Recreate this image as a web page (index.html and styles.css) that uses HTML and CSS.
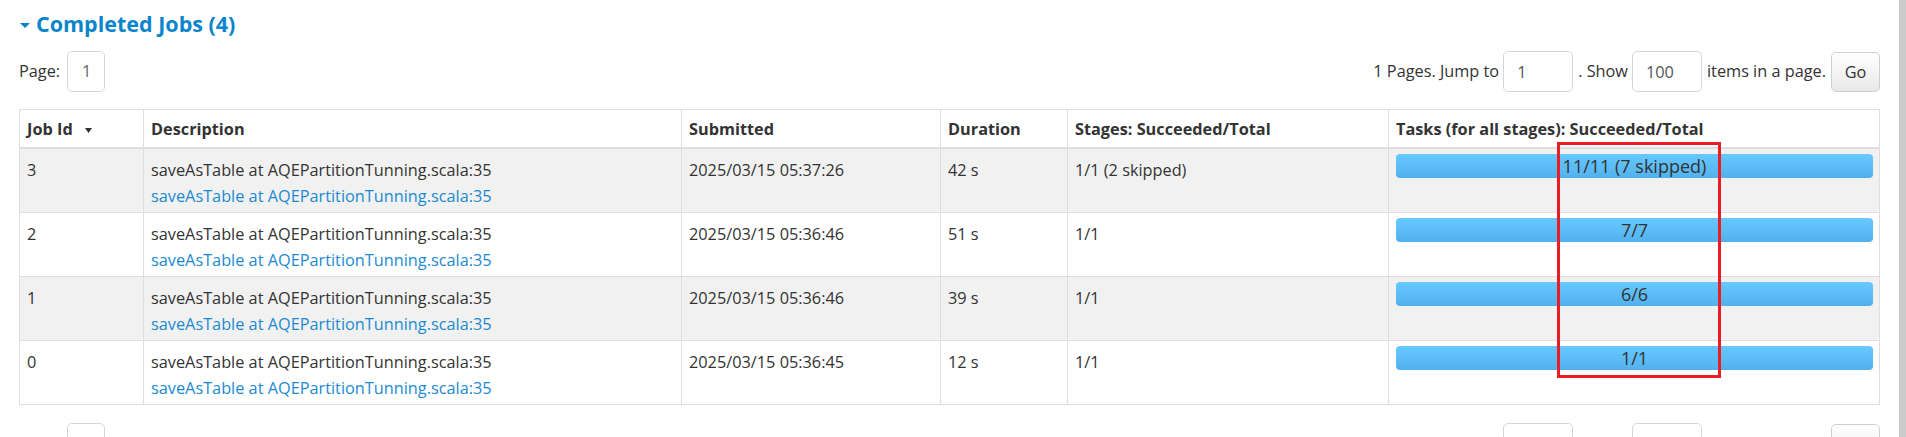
FILE: index.html
```html
<!DOCTYPE html>
<html lang="en">
<head>
  <meta charset="utf-8" />
  <title>Spark Jobs</title>
  <link rel="stylesheet" href="styles.css">
</head>
<body>
  <div class="page">
    <h4 class="section-title"><span class="arrow-open"></span>Completed Jobs (4)</h4>

    <div class="paged-nav">
      <div class="nav-left">
        <span>Page:</span>
        <span class="page-box">1</span>
      </div>
      <form class="nav-right">
        <span>1 Pages. Jump to</span>
        <input class="nav-ipt" type="text" value="1">
        <span>. Show</span>
        <input class="nav-ipt" type="text" value="100">
        <span>items in a page.</span>
        <button class="go-btn" type="button">Go</button>
      </form>
    </div>

    <table class="job-table">
      <colgroup>
        <col class="c-id"><col class="c-desc"><col class="c-time"><col class="c-dur"><col class="c-stage"><col class="c-task">
      </colgroup>
      <thead>
        <tr>
          <th>Job Id <svg class="sort-icon" width="7" height="5" viewBox="0 0 7 5"><polygon points="0,0 7,0 3.5,5" fill="#333"/></svg></th>
          <th>Description</th>
          <th>Submitted</th>
          <th>Duration</th>
          <th>Stages: Succeeded/Total</th>
          <th>Tasks (for all stages): Succeeded/Total</th>
        </tr>
      </thead>
      <tbody>
        <tr class="odd">
          <td>3</td>
          <td>saveAsTable at AQEPartitionTunning.scala:35<br><a class="name-link" href="#">saveAsTable at AQEPartitionTunning.scala:35</a></td>
          <td>2025/03/15 05:37:26</td>
          <td>42 s</td>
          <td>1/1 (2 skipped)</td>
          <td><div class="progress">11/11 (7 skipped)</div></td>
        </tr>
        <tr>
          <td>2</td>
          <td>saveAsTable at AQEPartitionTunning.scala:35<br><a class="name-link" href="#">saveAsTable at AQEPartitionTunning.scala:35</a></td>
          <td>2025/03/15 05:36:46</td>
          <td>51 s</td>
          <td>1/1</td>
          <td><div class="progress">7/7</div></td>
        </tr>
        <tr class="odd">
          <td>1</td>
          <td>saveAsTable at AQEPartitionTunning.scala:35<br><a class="name-link" href="#">saveAsTable at AQEPartitionTunning.scala:35</a></td>
          <td>2025/03/15 05:36:46</td>
          <td>39 s</td>
          <td>1/1</td>
          <td><div class="progress">6/6</div></td>
        </tr>
        <tr>
          <td>0</td>
          <td>saveAsTable at AQEPartitionTunning.scala:35<br><a class="name-link" href="#">saveAsTable at AQEPartitionTunning.scala:35</a></td>
          <td>2025/03/15 05:36:45</td>
          <td>12 s</td>
          <td>1/1</td>
          <td><div class="progress">1/1</div></td>
        </tr>
      </tbody>
    </table>

    <div class="paged-nav bottom-nav">
      <div class="nav-left">
        <span>Page:</span>
        <span class="page-box">1</span>
      </div>
      <form class="nav-right">
        <span>1 Pages. Jump to</span>
        <input class="nav-ipt" type="text" value="1">
        <span>. Show</span>
        <input class="nav-ipt" type="text" value="100">
        <span>items in a page.</span>
        <button class="go-btn" type="button">Go</button>
      </form>
    </div>
  </div>

  <div class="mark-box"></div>
  <div class="scroll-thumb"></div>
</body>
</html>
```

FILE: styles.css
```css
*{margin:0;padding:0;box-sizing:border-box;}
html,body{width:100%;height:100%;position:relative;overflow:hidden;}
body{
  font-family:"Segoe UI","Open Sans",sans-serif;
  font-size:16.3px;
  line-height:26px;
  color:#333;
  background:#fff;
}
.page{
  padding:9px 26px 0 19px;
}
.section-title{
  display:flex;
  align-items:center;
  height:30px;
  font-size:21.5px;
  font-weight:700;
  color:#0a85cc;
}
.arrow-open{
  width:0;
  height:0;
  margin:2px 6px 0 1px;
  border-left:5px solid transparent;
  border-right:5px solid transparent;
  border-top:5px solid #0a85cc;
}
.paged-nav{
  display:flex;
  justify-content:space-between;
  align-items:center;
  margin-top:12px;
  height:41px;
}
.nav-left,.nav-right{
  display:flex;
  align-items:center;
}
.nav-left span,.nav-right span{
  margin-top:-2px;
}
.page-box{
  width:38px;
  height:41px;
  margin-left:7px;
  padding-left:14px;
  line-height:39px;
  color:#666;
  border:1px solid #d6d6d6;
  border-radius:5px;
}
.nav-left .page-box{
  margin-top:0;
}
.nav-ipt{
  width:70px;
  height:41px;
  margin:0 5px 0 4px;
  padding:0 13px;
  font:inherit;
  color:#555;
  border:1px solid #d6d6d6;
  border-radius:5px;
  outline:none;
}
.go-btn{
  width:49px;
  height:40px;
  margin-left:5px;
  font:inherit;
  color:#333;
  border:1px solid #cfcfcf;
  border-radius:5px;
  background:linear-gradient(to bottom,#fff,#e8e8e8);
}
.job-table{
  width:100%;
  margin-top:17px;
  table-layout:fixed;
  border-collapse:collapse;
  border:1px solid #dedede;
}
.c-id{width:124px;}
.c-desc{width:538px;}
.c-time{width:259px;}
.c-dur{width:127px;}
.c-stage{width:321px;}
.job-table th,.job-table td{
  padding:6px 6px 5px 7px;
  text-align:left;
  vertical-align:top;
  border:1px solid #dedede;
}
.job-table td{
  padding-top:8px;
  padding-bottom:3px;
}
.job-table th{
  font-weight:700;
  border-bottom:2px solid #dedede;
}
.sort-icon{
  margin-left:8px;
  vertical-align:middle;
}
.job-table tr.odd td{
  background:#f1f1f1;
}
.name-link{
  color:#1b8ad3;
  text-decoration:none;
}
.progress{
  height:24px;
  margin-top:-3px;
  font-size:18px;
  line-height:24px;
  text-align:center;
  color:#333;
  border-radius:4px;
  background:linear-gradient(to bottom,#68c9ff,#51b1ee);
}
.bottom-nav{
  margin-top:18px;
}
/* red annotation frame over the tasks column */
.mark-box{
  position:absolute;
  left:1557px;
  top:142px;
  width:164px;
  height:236px;
  border:3px solid #ea1c24;
}
.scroll-thumb{
  position:fixed;
  top:0;
  right:0;
  width:7px;
  height:100%;
  background:#cbcbcb;
}
```
